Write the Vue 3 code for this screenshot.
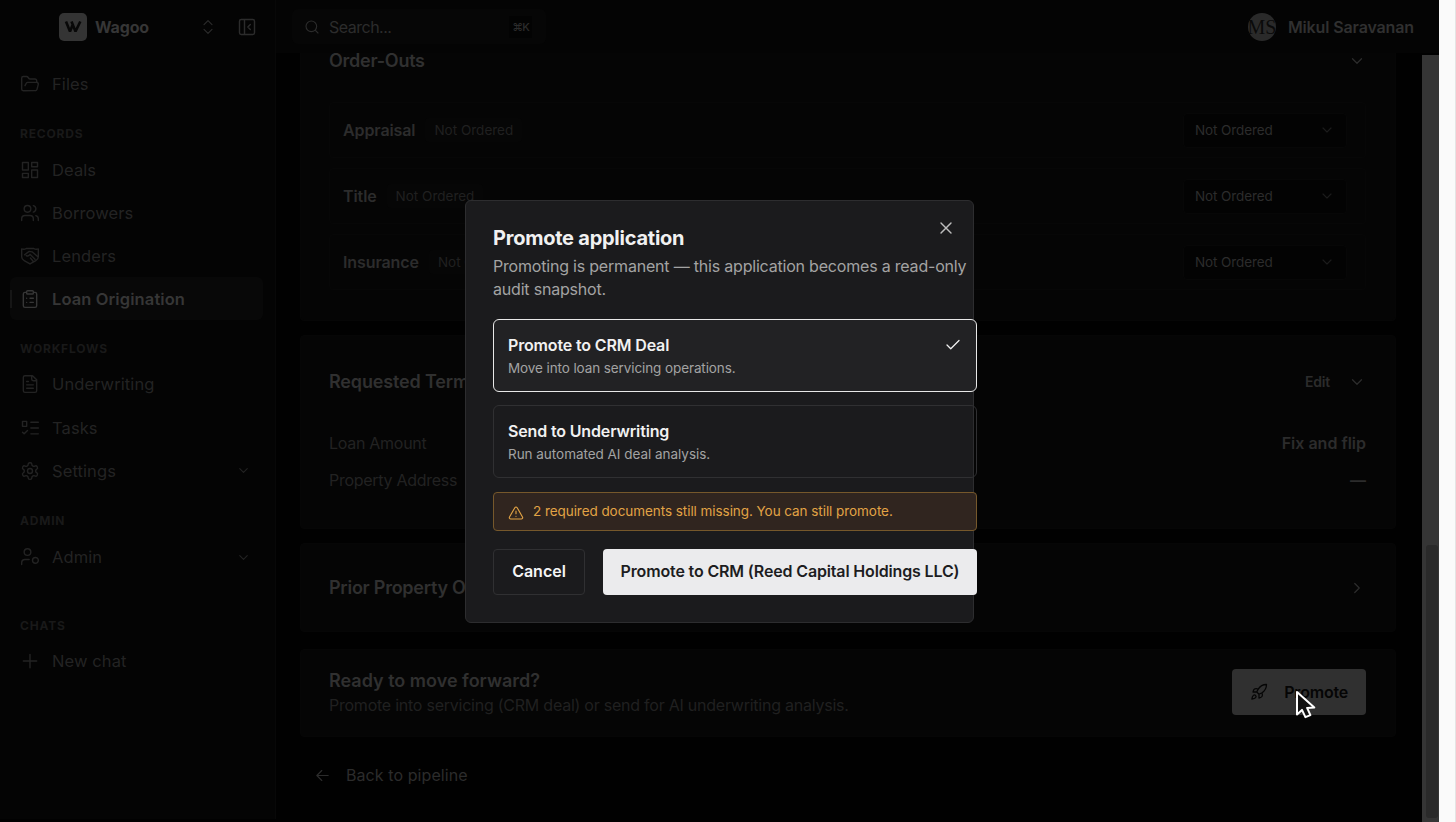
<template>
  <div class="screen">
    <div class="app">
      <aside class="sidebar">
        <div class="brand">
          <span class="brand-logo">
            <svg viewBox="0 0 28 28"><path d="M7 8.500l4 10 3-7.500M12.500 8.500l4 10 4.800-10" /></svg>
          </span>
          <span class="brand-name">Wagoo</span>
          <svg class="icon brand-switch" viewBox="0 0 24 24"><path :d="icons.upDown" /></svg>
          <svg class="icon brand-collapse" viewBox="0 0 24 24"><path :d="icons.panel" /></svg>
        </div>
        <nav class="nav">
          <section v-for="group in navGroups" :key="group.id" :class="['group', group.id]">
            <h4 v-if="group.label">{{ group.label }}</h4>
            <a v-for="item in group.items" :key="item.name" :class="['nav-item', { active: item.active }]">
              <svg class="icon" viewBox="0 0 24 24"><path :d="icons[item.icon]" /></svg>
              <span>{{ item.name }}</span>
              <svg v-if="item.expand" class="icon caret" viewBox="0 0 24 24"><path :d="icons.down" /></svg>
            </a>
          </section>
        </nav>
      </aside>

      <div class="main">
        <header class="topbar">
          <div class="search">
            <svg class="icon" viewBox="0 0 24 24"><path :d="icons.search" /></svg>
            <span class="search-text">Search...</span>
            <kbd>⌘K</kbd>
          </div>
          <div class="user">
            <span class="avatar"><span>MS</span></span>
            <span class="user-name">Mikul Saravanan</span>
          </div>
        </header>

        <div class="body">
          <div class="content">
            <section class="card orders">
              <div class="card-head">
                <h3>Order-Outs</h3>
                <svg class="icon chev" viewBox="0 0 24 24"><path :d="icons.down" /></svg>
              </div>
              <div class="order-list">
                <div v-for="order in orders" :key="order" class="order">
                  <strong>{{ order }}</strong>
                  <span class="badge">Not Ordered</span>
                  <div class="select">
                    <span>Not Ordered</span>
                    <svg class="icon" viewBox="0 0 24 24"><path :d="icons.down" /></svg>
                  </div>
                </div>
              </div>
            </section>

            <section class="card terms">
              <div class="card-head">
                <h3>Requested Terms</h3>
                <span class="edit">Edit</span>
                <svg class="icon chev" viewBox="0 0 24 24"><path :d="icons.down" /></svg>
              </div>
              <dl>
                <div><dt>Loan Amount</dt><dd>Fix and flip</dd></div>
                <div><dt>Property Address</dt><dd>—</dd></div>
              </dl>
            </section>

            <section class="card prior">
              <h3>Prior Property Ownership</h3>
              <svg class="icon chev" viewBox="0 0 24 24"><path :d="icons.right" /></svg>
            </section>

            <section class="card ready">
              <div>
                <h3>Ready to move forward?</h3>
                <p>Promote into servicing (CRM deal) or send for AI underwriting analysis.</p>
              </div>
              <button class="promote">
                <svg class="icon" viewBox="0 0 24 24"><path :d="icons.rocket" /></svg>
                <span>Promote</span>
              </button>
            </section>

            <a class="back">
              <svg class="icon" viewBox="0 0 24 24"><path :d="icons.left" /></svg>
              <span>Back to pipeline</span>
            </a>
          </div>
          <div class="scrollbar"><div class="thumb"></div></div>
        </div>
      </div>
    </div>
    <div class="gutter"></div>

    <div class="modal" role="dialog">
      <svg class="icon close" viewBox="0 0 24 24"><path :d="icons.close" /></svg>
      <h2>Promote application</h2>
      <p class="desc">Promoting is permanent — this application becomes a read-only<br />audit snapshot.</p>
      <div
        v-for="option in options"
        :key="option.id"
        :class="['option', { selected: option.id === selected }]"
        @click="selected = option.id"
      >
        <div>
          <h5>{{ option.title }}</h5>
          <p>{{ option.text }}</p>
        </div>
        <svg v-if="option.id === selected" class="icon" viewBox="0 0 24 24"><path :d="icons.check" /></svg>
      </div>
      <div class="warning">
        <svg class="icon" viewBox="0 0 24 24"><path :d="icons.alert" /></svg>
        <span>2 required documents still missing. You can still promote.</span>
      </div>
      <div class="actions">
        <button class="cancel">Cancel</button>
        <button class="confirm"><span>Promote to CRM (Reed Capital Holdings LLC)</span></button>
      </div>
    </div>

    <svg class="cursor" viewBox="0 0 22 30">
      <path d="M2 2v22.500l5-4.600 3.400 7.300 5-2.100-3.300-7.200 7.200-.4z" />
    </svg>
  </div>
</template>

<script setup>
import { ref } from 'vue'

const icons = {
  folder: 'm6 14 1.500-2.900A2 2 0 0 1 9.240 10H20a2 2 0 0 1 1.940 2.500l-1.540 6a2 2 0 0 1-1.950 1.500H4a2 2 0 0 1-2-2V5a2 2 0 0 1 2-2h3.900a2 2 0 0 1 1.690.9l.81 1.200a2 2 0 0 0 1.670.9H18a2 2 0 0 1 2 2v2',
  dashboard: 'M3 3h7v9H3zM14 3h7v5h-7zM14 12h7v9h-7zM3 16h7v5H3z',
  users: 'M16 21v-2a4 4 0 0 0-4-4H6a4 4 0 0 0-4 4v2M5 7a4 4 0 1 0 8 0a4 4 0 1 0-8 0M22 21v-2a4 4 0 0 0-3-3.870M16 3.130a4 4 0 0 1 0 7.750',
  lenders: 'M2 3.500c2 .8 4 .5 5.500-.5h9c1.500 1 3.500 1.300 5.500.5V13c0 2-1 3.500-3 4.500L12 21.500l-7-4C3 16.500 2 15 2 13zM5.500 10.500 11 6.500l3.500.5 7 6M7.500 11.500c1.500 1 3.500 0 4.500-1.500l6 6M12.500 14.500l3 3.500',
  clipboard: 'M9 2h6a1 1 0 0 1 1 1v2a1 1 0 0 1-1 1H9a1 1 0 0 1-1-1V3a1 1 0 0 1 1-1zM16 4h2a2 2 0 0 1 2 2v14a2 2 0 0 1-2 2H6a2 2 0 0 1-2-2V6a2 2 0 0 1 2-2h2M12 11h4M12 16h4M8 11h.01M8 16h.01',
  file: 'M15 2H6a2 2 0 0 0-2 2v16a2 2 0 0 0 2 2h12a2 2 0 0 0 2-2V7zM14 2v4a2 2 0 0 0 2 2h4M10 9H8M16 13H8M16 17H8',
  tasks: 'M3 4h5v6H3zM3 17l2 2 4-4M13 5h9M13 12h9M13 19h9',
  settings: 'M12.220 2h-.44a2 2 0 0 0-2 2v.18a2 2 0 0 1-1 1.730l-.43.250a2 2 0 0 1-2 0l-.15-.08a2 2 0 0 0-2.730.730l-.22.380a2 2 0 0 0 .730 2.730l.15.1a2 2 0 0 1 1 1.720v.51a2 2 0 0 1-1 1.740l-.15.09a2 2 0 0 0-.73 2.730l.22.380a2 2 0 0 0 2.730.730l.15-.08a2 2 0 0 1 2 0l.43.250a2 2 0 0 1 1 1.730V20a2 2 0 0 0 2 2h.44a2 2 0 0 0 2-2v-.18a2 2 0 0 1 1-1.730l.43-.25a2 2 0 0 1 2 0l.15.080a2 2 0 0 0 2.730-.73l.22-.39a2 2 0 0 0-.73-2.730l-.15-.08a2 2 0 0 1-1-1.740v-.5a2 2 0 0 1 1-1.740l.15-.09a2 2 0 0 0 .73-2.730l-.22-.38a2 2 0 0 0-2.730-.73l-.15.080a2 2 0 0 1-2 0l-.43-.25a2 2 0 0 1-1-1.730V4a2 2 0 0 0-2-2zM9 12a3 3 0 1 0 6 0a3 3 0 1 0-6 0',
  admin: 'M5 6a4 4 0 1 0 8 0a4 4 0 1 0-8 0M2 21v-2a4 4 0 0 1 4-4h5M15 16a3.500 3.500 0 1 0 7 0a3.500 3.500 0 1 0-7 0',
  plus: 'M4 12h16M12 4v16',
  down: 'm6 9 6 6 6-6',
  right: 'm9 18 6-6-6-6',
  upDown: 'm6 8.500 6-6 6 6M6 15.500l6 6 6-6',
  panel: 'M5 3h14a2 2 0 0 1 2 2v14a2 2 0 0 1-2 2H5a2 2 0 0 1-2-2V5a2 2 0 0 1 2-2zM9 3v18M16 15l-3-3 3-3',
  search: 'M3 11a8 8 0 1 0 16 0a8 8 0 1 0-16 0M21 21l-4.300-4.300',
  rocket: 'M4.500 16.500c-1.500 1.260-2 5-2 5s3.740-.5 5-2c.71-.84.7-2.130-.09-2.910a2.180 2.180 0 0 0-2.910-.09zM12 15l-3-3a22 22 0 0 1 2-3.950A12.880 12.880 0 0 1 22 2c0 2.720-.78 7.500-6 11a22.350 22.350 0 0 1-4 2zM9 12H4s.55-3.030 2-4c1.620-1.080 5 0 5 0M12 15v5s3.030-.55 4-2c1.080-1.620 0-5 0-5',
  left: 'm11 19-7-7 7-7M20 12H4',
  close: 'M18 6 6 18M6 6l12 12',
  check: 'M20 6 9 17l-5-5',
  alert: 'm21.730 18-8-14a2 2 0 0 0-3.480 0l-8 14A2 2 0 0 0 4 21h16a2 2 0 0 0 1.730-3M12 9v4M12 17h.01',
}

const navGroups = [
  { id: 'top', items: [{ name: 'Files', icon: 'folder' }] },
  {
    id: 'records',
    label: 'RECORDS',
    items: [
      { name: 'Deals', icon: 'dashboard' },
      { name: 'Borrowers', icon: 'users' },
      { name: 'Lenders', icon: 'lenders' },
      { name: 'Loan Origination', icon: 'clipboard', active: true },
    ],
  },
  {
    id: 'workflows',
    label: 'WORKFLOWS',
    items: [
      { name: 'Underwriting', icon: 'file' },
      { name: 'Tasks', icon: 'tasks' },
      { name: 'Settings', icon: 'settings', expand: true },
    ],
  },
  { id: 'admin', label: 'ADMIN', items: [{ name: 'Admin', icon: 'admin', expand: true }] },
  { id: 'chats', label: 'CHATS', items: [{ name: 'New chat', icon: 'plus' }] },
]

const orders = ['Appraisal', 'Title', 'Insurance']

const options = [
  { id: 'crm', title: 'Promote to CRM Deal', text: 'Move into loan servicing operations.' },
  { id: 'uw', title: 'Send to Underwriting', text: 'Run automated AI deal analysis.' },
]
const selected = ref('crm')
</script>

<style>
body {
  background: #010101;
  overflow: hidden;
}
</style>

<style scoped>
.screen {
  position: relative;
  display: flex;
  width: 1456px;
  height: 822px;
  overflow: hidden;
  background: #010101;
  color: #2c2c2c;
  font-family: Inter, "Liberation Sans", sans-serif;
  font-size: 16px;
  line-height: 20px;
}

.screen * {
  box-sizing: border-box;
}

h2, h3, h4, h5, p, dl, dd {
  margin: 0;
}

span, strong, a, h3, dt, dd {
  white-space: nowrap;
}

button {
  font: inherit;
}

.icon {
  flex: none;
  width: 20px;
  height: 20px;
  fill: none;
  stroke: currentColor;
  stroke-width: 1.7;
  stroke-linecap: round;
  stroke-linejoin: round;
}

.app {
  display: flex;
  width: 1439px;
}

.gutter {
  width: 17px;
  background: #fafafa;
  border-right: 1px solid #e4e4e4;
}

/* sidebar */
.sidebar {
  width: 276px;
  height: 819px;
  flex: none;
  background: #040404;
  border-right: 1px solid #080808;
}

.brand {
  display: flex;
  align-items: center;
  height: 54px;
  padding: 0 18px 0 59px;
}

.brand-logo {
  width: 28px;
  height: 28px;
  border-radius: 5px;
  background: #343434;
}

.brand-logo svg {
  display: block;
  fill: none;
  stroke: #080808;
  stroke-width: 2.6;
  stroke-linejoin: bevel;
}

.brand-name {
  margin-left: 8px;
  font-weight: 700;
  letter-spacing: -0.15px;
  color: #363636;
}

.brand-switch {
  width: 16px;
  height: 16px;
  margin-left: auto;
}

.brand-collapse {
  margin-left: 21px;
}

.nav {
  padding: 8.4px 12px 0 10px;
}

.group h4 {
  padding: 19px 0 3.500px 10px;
  font-size: 12px;
  line-height: 20px;
  font-weight: 700;
  letter-spacing: 0.8px;
  color: #191919;
}

.group.admin h4 {
  padding-bottom: 4.500px;
}

.group.chats h4 {
  padding-top: 37px;
}

.nav-item {
  display: flex;
  align-items: center;
  gap: 12px;
  height: 43.1px;
  padding: 0 10px;
  font-size: 16.5px;
  letter-spacing: 0.1px;
  color: #232323;
}

.nav-item.active {
  position: relative;
  background: #080808;
  border-radius: 6px;
  color: #363636;
  font-weight: 600;
}

.nav-item.active::before {
  content: "";
  position: absolute;
  left: 0;
  top: 13px;
  width: 2px;
  height: 18px;
  background: #161616;
}

.caret {
  width: 15px;
  height: 15px;
  margin-left: auto;
  margin-right: 2px;
}

/* top bar */
.main {
  flex: 1;
  display: flex;
  flex-direction: column;
}

.topbar {
  display: flex;
  align-items: center;
  justify-content: space-between;
  height: 53px;
  flex: none;
  padding: 0 25px 0 16px;
  background: #040404;
}

.search {
  display: flex;
  align-items: center;
  width: 254px;
  height: 35px;
  padding: 0 14px 0 12px;
  border-radius: 6px;
  background: #060606;
}

.search .icon {
  width: 16px;
  height: 16px;
}

.search-text {
  margin-left: 9px;
  letter-spacing: -0.5px;
}

kbd {
  margin-left: auto;
  padding: 2px 3px;
  font: 500 11px/18px Inter, "DejaVu Sans", sans-serif;
  letter-spacing: -0.8px;
  background: #030303;
}

.user {
  display: flex;
  align-items: center;
  gap: 12px;
}

.avatar {
  display: flex;
  justify-content: center;
  align-items: center;
  width: 28px;
  height: 28px;
  border-radius: 50%;
  background: #2a2a2a;
  color: #0a0a0a;
  font: 20px/28px "Liberation Serif", serif;
}

.user-name {
  font-weight: 600;
  letter-spacing: -0.13px;
  color: #303030;
}

/* page */
.body {
  flex: 1;
  display: flex;
  min-height: 0;
}

.content {
  flex: 1;
  padding: 0 26px 0 24px;
  overflow: hidden;
}

.scrollbar {
  width: 17px;
  margin-top: 2px;
  padding: 490px 1px 4px 4px;
  background: #353535;
}

.thumb {
  height: 100%;
  background: #2a2a2a;
  border-radius: 3px;
}

.card {
  padding: 0 29px 0 28px;
  border-radius: 4px;
  background: #050505;
  border: 1px solid #060606;
}

.card h3 {
  font-size: 18px;
  line-height: 24px;
  font-weight: 600;
  letter-spacing: -0.15px;
  color: #303030;
}

.card-head {
  display: flex;
  align-items: center;
}

.card-head h3 {
  margin-right: auto;
}

.chev {
  width: 18px;
  height: 18px;
}

.orders {
  height: 268px;
  border-top: 0;
  border-radius: 0 0 4px 4px;
}

.orders .card-head {
  height: 16px;
}

.orders h3 {
  line-height: 16px;
  letter-spacing: -0.25px;
}

.order-list {
  display: flex;
  flex-direction: column;
  gap: 10px;
  margin-top: 33px;
}

.order {
  display: flex;
  align-items: center;
  height: 56px;
  padding: 0 18px 0 13px;
  border: 1px solid #070707;
  border-radius: 4px;
}

.order strong {
  font-weight: 600;
  letter-spacing: -0.1px;
}

.badge {
  margin-left: 10px;
  padding: 2px 9px;
  border-radius: 4px;
  font-size: 13.5px;
  color: #202020;
  background: #060606;
}

.select {
  display: flex;
  align-items: center;
  justify-content: space-between;
  width: 164px;
  height: 35px;
  margin-left: auto;
  padding: 0 11px;
  background: #030303;
  border: 1px solid #070707;
  border-radius: 4px;
  font-size: 13.5px;
  letter-spacing: -0.1px;
}

.select .icon {
  width: 16px;
  height: 16px;
  color: #1c1c1c;
}

.terms {
  height: 194px;
  margin-top: 14px;
  padding-top: 34px;
}

.edit {
  margin-right: 18px;
  font-size: 14px;
  font-weight: 600;
  letter-spacing: -0.2px;
}

.terms dl {
  margin-top: 39px;
}

.terms dl div {
  display: flex;
  justify-content: space-between;
  height: 37px;
}

dt {
  letter-spacing: -0.28px;
  color: #222;
}

dd {
  font-weight: 600;
}

.prior {
  display: flex;
  align-items: center;
  justify-content: space-between;
  height: 89px;
  margin-top: 14px;
}

.prior h3 {
  letter-spacing: -0.25px;
}

.ready {
  display: flex;
  align-items: center;
  justify-content: space-between;
  height: 88px;
  margin-top: 17px;
  padding-bottom: 2px;
}

.ready h3 {
  padding-top: 2px;
  letter-spacing: 0;
}

.ready p {
  line-height: 25px;
  letter-spacing: -0.24px;
  color: #202020;
}

.promote {
  display: flex;
  align-items: center;
  justify-content: space-between;
  width: 134px;
  height: 46px;
  padding: 0 18px;
  border: 0;
  border-radius: 4px;
  background: #303030;
  color: #050505;
  font-weight: 600;
  letter-spacing: -0.2px;
}

.promote .icon {
  width: 18px;
  height: 18px;
}

.back {
  display: flex;
  align-items: center;
  gap: 15px;
  margin: 28px 0 0 14px;
  letter-spacing: 0.08px;
}

.back .icon {
  width: 17px;
  height: 17px;
}

/* dialog lies over the page */
.modal {
  position: absolute;
  left: 465px;
  top: 200px;
  width: 509px;
  height: 423px;
  padding: 24px 0 0 27px;
  background: #1b1b1d;
  border: 1px solid #2d2d2f;
  border-radius: 6px;
  color: #f1f1f1;
}

.close {
  position: absolute;
  right: 17px;
  top: 17px;
  color: #bdbdbd;
}

.modal h2 {
  font-size: 20px;
  line-height: 26px;
  font-weight: 700;
  letter-spacing: -0.24px;
}

.desc {
  margin-top: 4px;
  line-height: 23px;
  letter-spacing: -0.2px;
  color: #a3a3a3;
  white-space: nowrap;
}

.option {
  display: flex;
  justify-content: space-between;
  width: 484px;
  height: 73px;
  margin-top: 13px;
  padding: 14px 14px 0;
  border: 1px solid #303032;
  border-radius: 6px;
}

.desc + .option {
  margin-top: 18px;
}

.option.selected {
  background: #222224;
  border-color: #e8e8e8;
}

.option h5 {
  font-size: 16px;
  line-height: 22px;
  font-weight: 600;
  letter-spacing: -0.15px;
}

.option p {
  font-size: 13.5px;
  line-height: 24px;
  letter-spacing: -0.1px;
  color: #a3a3a3;
}

.option + .option p {
  letter-spacing: -0.03px;
}

.option .icon {
  width: 18px;
  height: 18px;
  margin-top: 2px;
}

.warning {
  display: flex;
  align-items: center;
  gap: 9px;
  width: 484px;
  height: 39px;
  margin-top: 14px;
  padding: 0 0 1px 14px;
  border: 1px solid #76582b;
  border-radius: 4px;
  background: #30251f;
  color: #e2a345;
  font-size: 13.5px;
  letter-spacing: -0.06px;
}

.warning .icon {
  width: 16px;
  height: 16px;
  margin-top: 3px;
}

.actions {
  display: flex;
  gap: 18px;
  width: 484px;
  margin-top: 18px;
}

.actions button {
  height: 45.5px;
  padding: 0 0 1px;
  border-radius: 4px;
  font-weight: 600;
}

.cancel {
  width: 92px;
  border: 1px solid #303032;
  background: #1b1b1d;
  color: #f5f5f5;
}

.actions .confirm {
  flex: 1;
  border: 0;
  background: #ebebed;
  color: #1d1d1f;
  letter-spacing: -0.15px;
}

.cursor {
  position: absolute;
  left: 1295px;
  top: 690px;
  width: 22px;
  height: 30px;
  fill: #111;
  stroke: #fff;
  stroke-width: 2;
  stroke-linejoin: round;
}
</style>
